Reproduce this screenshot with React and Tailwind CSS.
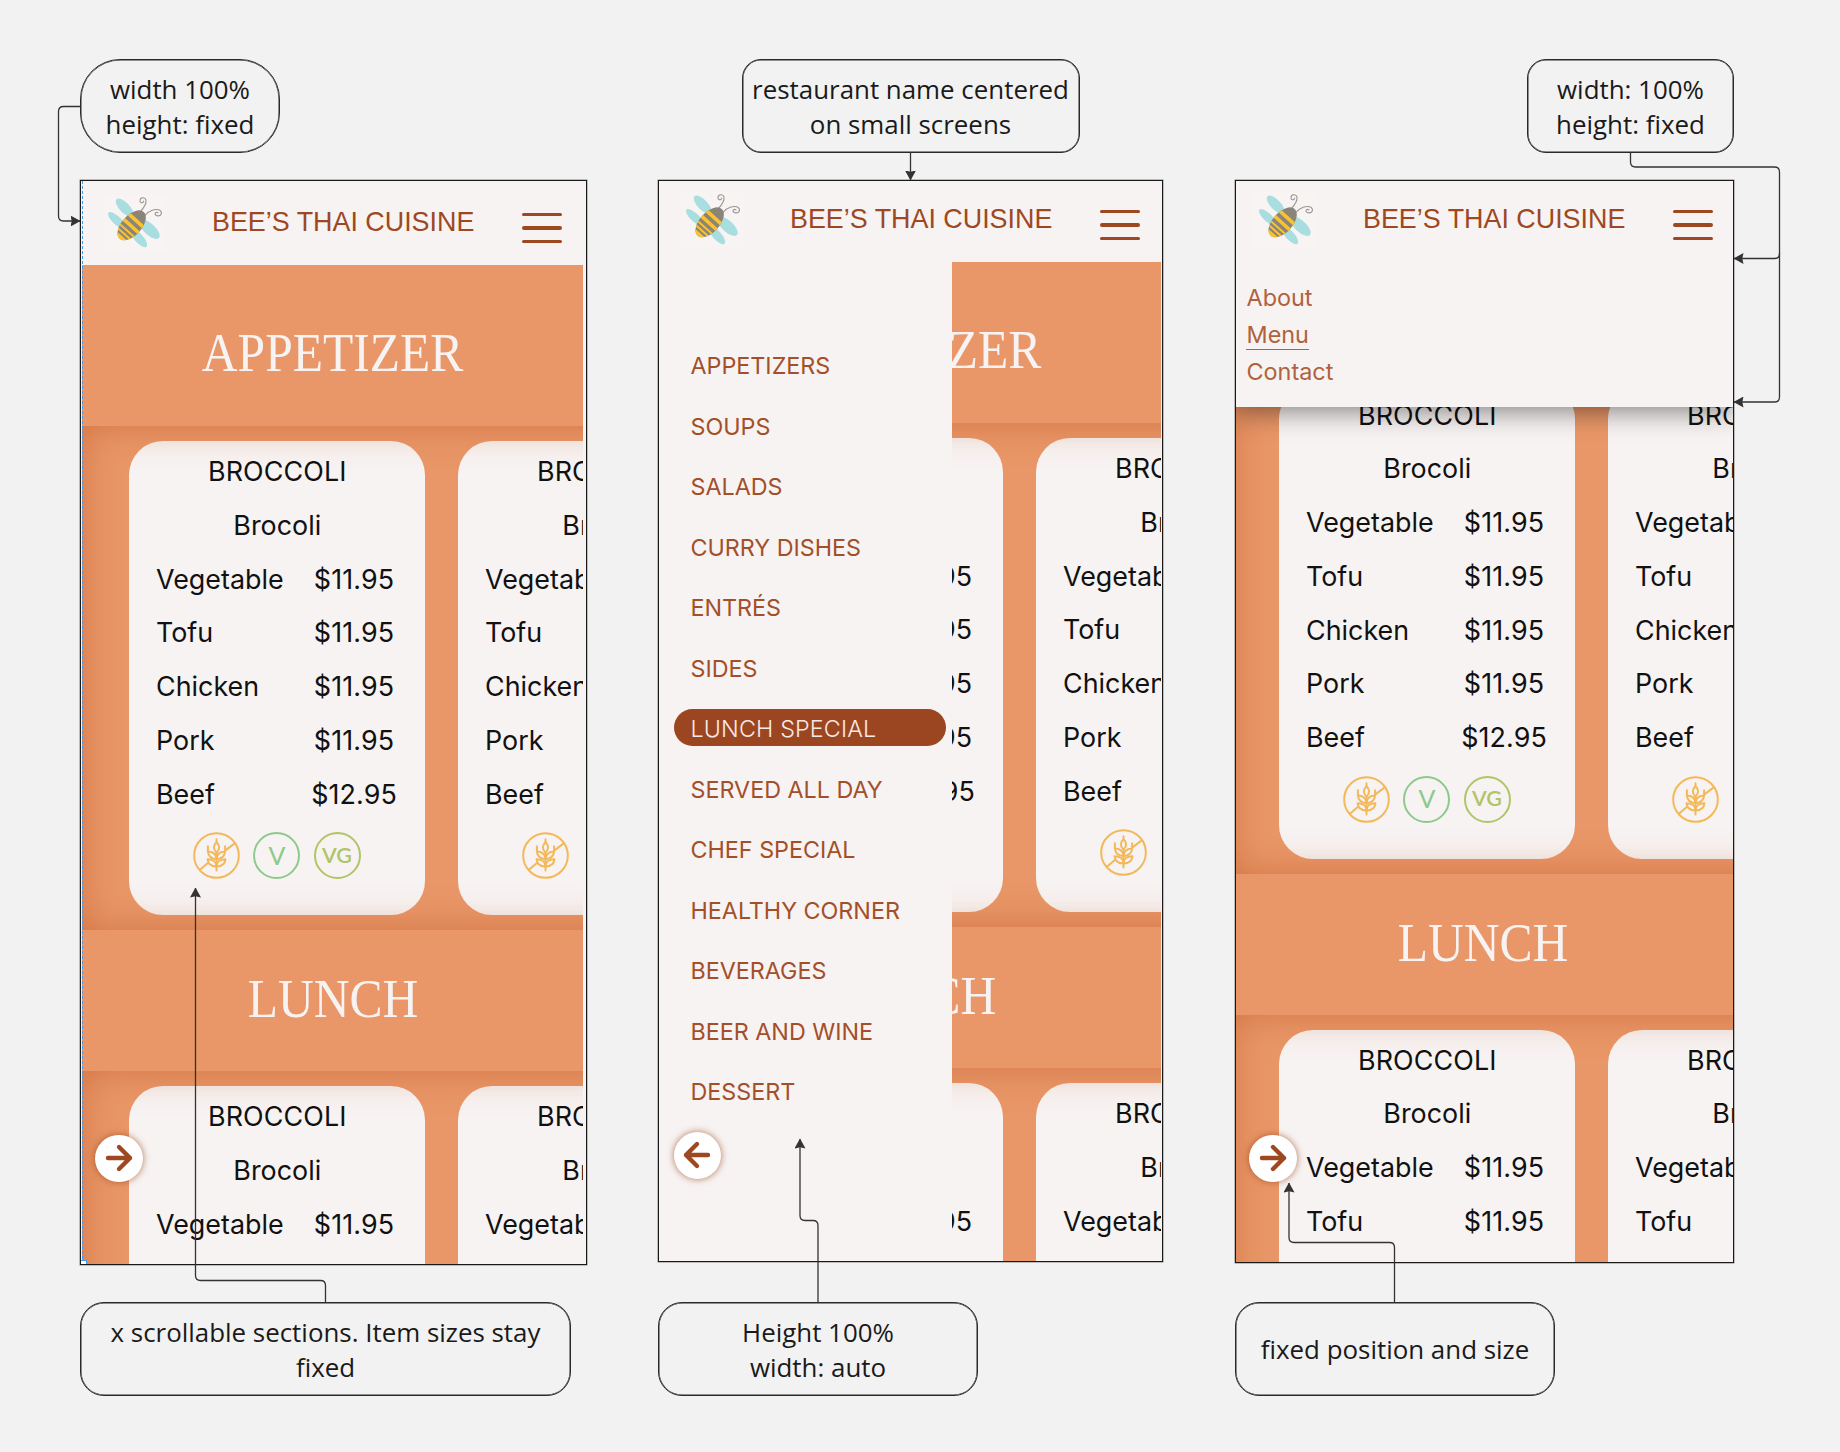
import React from "react";

const PROTEINS = [
  ["Vegetable", "$11.95"],
  ["Tofu", "$11.95"],
  ["Chicken", "$11.95"],
  ["Pork", "$11.95"],
  ["Beef", "$12.95"],
];

const CATEGORIES = [
  "APPETIZERS",
  "SOUPS",
  "SALADS",
  "CURRY DISHES",
  "ENTRÉS",
  "SIDES",
  "LUNCH SPECIAL",
  "SERVED ALL DAY",
  "CHEF SPECIAL",
  "HEALTHY CORNER",
  "BEVERAGES",
  "BEER AND WINE",
  "DESSERT",
];

function Bee() {
  return (
    <svg viewBox="39 45 189 168" className="h-14 w-[63px] shrink-0 bg-[#f8f4f4]">
      <g fill="#a8dee0">
        <ellipse cx="104" cy="83" rx="35" ry="15" transform="rotate(46 104 83)" />
        <ellipse cx="80" cy="121" rx="34" ry="12.5" transform="rotate(44 80 121)" />
        <ellipse cx="179" cy="148" rx="38" ry="17" transform="rotate(43 179 148)" />
        <ellipse cx="146" cy="174" rx="35" ry="13" transform="rotate(48 146 174)" />
      </g>
      <g fill="none" stroke="#9b958e" strokeWidth="3.2" strokeLinecap="round">
        <path d="M151 95C161 84 170 73 168 60C165 50 150 52 150 62C150 70 160 71 161 63" />
        <path d="M165 106C176 93 197 84 210 91C219 98 213 110 201 107C191 104 195 94 204 98" />
      </g>
      <clipPath id="bee-body">
        <ellipse cx="0" cy="0" rx="54" ry="30" />
      </clipPath>
      <g transform="translate(125 136) rotate(-48)">
        <g clipPath="url(#bee-body)">
          <rect x="-60" y="-35" width="120" height="70" fill="#8a8479" />
          <g fill="#f9c22e">
            <rect x="14" y="-35" width="11" height="70" />
            <rect x="-8" y="-35" width="11" height="70" />
            <rect x="-24" y="-35" width="6" height="70" />
            <rect x="-37" y="-35" width="6" height="70" />
            <rect x="-60" y="-35" width="17" height="70" />
          </g>
        </g>
      </g>
    </svg>
  );
}

function Burger() {
  return (
    <div className="flex w-10 flex-col gap-[10px]">
      <span className="h-[3.4px] rounded-full bg-[#9e4822]" />
      <span className="h-[3.4px] rounded-full bg-[#9e4822]" />
      <span className="h-[3.4px] rounded-full bg-[#9e4822]" />
    </div>
  );
}

function Header() {
  return (
    <header className="flex h-[81px] items-start bg-[#f7f3f2]">
      <div className="ml-[21px] mt-[11px]">
        <Bee />
      </div>
      <h1 className="ml-[46px] mt-[18px] whitespace-nowrap font-['Liberation_Sans',sans-serif] text-[26.88px] leading-10 text-[#9e4822]">
        BEE’S THAI CUISINE
      </h1>
      <div className="ml-auto mr-[21px] mt-[29px]">
        <Burger />
      </div>
    </header>
  );
}

function GlutenFree() {
  return (
    <svg
      viewBox="38 38 142 142"
      className="size-[47px]"
      fill="none"
      stroke="#f3b85a"
      strokeWidth="6"
      strokeLinecap="round"
      strokeLinejoin="round"
    >
      <circle cx="109" cy="109" r="67.5" />
      <path d="M109 60V70M109 100V154" />
      <path d="M109 69C99 78 98 90 109 100C120 90 119 78 109 69Z" />
      <path d="M83 81V97C84 110 93 119 109 120C109 106 99 98 83 97" />
      <path d="M135 81V97C134 110 125 119 109 120C109 106 119 98 135 97" />
      <path d="M82 120C83 134 93 142 109 142C109 128 98 120 82 120Z" />
      <path d="M136 120C135 134 125 142 109 142C109 128 120 120 136 120Z" />
      <path d="M60 151L81 133M138 92L162 74" />
    </svg>
  );
}

/*
 * rows:  how many protein rows are inside the visible area
 * peek:  the card is cut off by the screen's right edge, only its left part shows
 * under: the card lies below the open drawer, only its prices show
 */
function Card({ rows, peek, under }) {
  return (
    <article className="h-[474px] w-[295.5px] shrink-0 rounded-[34px] bg-[#f7f3f2] pl-px pt-1 text-[26.88px] leading-[53.75px] text-[#111]">
      <h3 className="h-[53.75px] text-center tracking-[0.12px]">{under ? null : "BROCCOLI"}</h3>
      <p className="h-[53.75px] text-center">{under ? null : "Brocoli"}</p>
      {PROTEINS.slice(0, rows).map(([name, price]) => (
        <div key={name} className="flex justify-between pl-[26px] pr-[27px]">
          <span>{under ? null : name}</span>
          {!peek && <span className="w-[87px] text-center tracking-[0.1px]">{price}</span>}
        </div>
      ))}
      {rows === PROTEINS.length && !under && (
        <div className="ml-[62.5px] mt-[11px] flex gap-[13.5px]">
          <GlutenFree />
          {!peek && (
            <>
              <span className="flex size-[47px] items-center justify-center rounded-full border-2 border-[#8dc98b] pb-px pl-px font-['Lato'] text-[25px] leading-none text-[#8dc98b]">
                V
              </span>
              <span className="flex size-[47px] items-center justify-center rounded-full border-2 border-[#b0c468] pb-px font-['Lato'] text-[21.5px] font-semibold leading-none text-[#b0c468]">
                VG
              </span>
            </>
          )}
        </div>
      )}
    </article>
  );
}

function CardStrip({ rows = 5, under }) {
  return (
    <section className="relative flex h-[504px] w-[760px] gap-[33.5px] bg-[#e99768] py-[15px] pl-[47px]">
      <Card rows={rows} under={under} />
      <Card rows={rows} peek />
      <div className="pointer-events-none absolute inset-0 shadow-[inset_0_0_36px_rgba(190,82,32,0.5)]" />
    </section>
  );
}

function Banner({ children, className }) {
  return (
    <div className={`flex items-center justify-center bg-[#e99768] ${className}`}>
      <h2 className="scale-x-[0.917] font-['Liberation_Serif',serif] text-[54px] leading-none text-[#f7f3f2]">
        {children}
      </h2>
    </div>
  );
}

function Fab({ back, className }) {
  return (
    <div
      className={`absolute z-20 flex size-[47.5px] items-center justify-center rounded-full bg-white shadow-[0_0_7px_rgba(158,72,34,0.75)] ${className}`}
    >
      <svg
        viewBox="0 0 30 30"
        className="size-[30px]"
        fill="none"
        stroke="#9e4822"
        strokeWidth="4.4"
        strokeLinecap="round"
        strokeLinejoin="round"
      >
        {back ? <path d="M26 15H4M15 4L4 15L15 26" /> : <path d="M4 15H26M15 4L26 15L15 26" />}
      </svg>
    </div>
  );
}

function Note({ className, children }) {
  return (
    <div
      className={`flex h-[94px] shrink-0 items-center justify-center border border-[#2a2a2a] pt-px text-center font-['Open_Sans',sans-serif] text-[25.9px] leading-[35px] text-[#1a1a1a] shadow-[inset_0_0_0_0.5px_#2a2a2a] ${className}`}
    >
      <p>{children}</p>
    </div>
  );
}

function Phone({ className, children }) {
  return (
    <div
      className={`relative mt-[27px] shrink-0 overflow-hidden border border-[#1a1a1a] bg-[#f7f3f2] shadow-[0_0_0_0.5px_rgba(26,26,26,0.5)] ${className}`}
    >
      {children}
    </div>
  );
}

function Drawer() {
  return (
    <nav className="absolute bottom-0 left-0 top-[81px] z-10 flex w-[293px] flex-col gap-[23.5px] bg-[#f7f3f2] pl-[14.5px] pt-[84px] text-[23.3px] text-[#a34f29]">
      {CATEGORIES.map((name) => (
        <a
          key={name}
          className={
            name === "LUNCH SPECIAL"
              ? "h-[37px] w-[272.5px] rounded-full bg-[#9c4521] pl-[17px] pt-px font-light leading-[38px] tracking-[0.15px] text-[#f7e9e3]"
              : "h-[37px] w-[272.5px] pl-[17px] pt-px leading-[38px]"
          }
        >
          {name}
        </a>
      ))}
    </nav>
  );
}

function Connectors() {
  return (
    <svg
      className="pointer-events-none absolute inset-0 z-30"
      width="1840"
      height="1452"
      fill="none"
      stroke="#333"
      strokeWidth="1.3"
    >
      <defs>
        <marker id="tip" viewBox="0 0 10 11" refX="9.5" refY="5.5" markerWidth="10" markerHeight="11" markerUnits="userSpaceOnUse" orient="auto">
          <path d="M0 0L10 5.5L0 11L1.2 5.5Z" fill="#333" stroke="none" />
        </marker>
      </defs>
      <path markerEnd="url(#tip)" d="M81 106.5H63.5Q58.5 106.5 58.5 111.5V216Q58.5 221 63.5 221H80" />
      <path markerEnd="url(#tip)" d="M910.5 153V180" />
      <path markerEnd="url(#tip)" d="M1630.5 153V162Q1630.5 167 1635.5 167H1774.5Q1779.5 167 1779.5 172V253.5Q1779.5 258.5 1774.5 258.5H1734" />
      <path markerEnd="url(#tip)" d="M1779.5 253V397Q1779.5 402 1774.5 402H1734" />
      <path markerEnd="url(#tip)" d="M325.5 1303V1285.5Q325.5 1280.5 320.5 1280.5H200.5Q195.5 1280.5 195.5 1275.5V888" />
      <path markerEnd="url(#tip)" d="M818 1303V1225.5Q818 1220.5 813 1220.5H805Q800 1220.5 800 1215.5V1139" />
      <path markerEnd="url(#tip)" d="M1394.5 1303V1247.5Q1394.5 1242.5 1389.5 1242.5H1294Q1289 1242.5 1289 1237.5V1183" />
    </svg>
  );
}

export default function App() {
  return (
    <main className="relative flex h-[1452px] w-[1840px] gap-[71px] overflow-hidden bg-[#f2f2f2] pb-[56px] pl-20 pt-[59px] font-['Inter',sans-serif]">
      <div className="flex w-[507px] flex-col">
        <Note className="w-[200px] rounded-[40px]">
          width 100%
          <br />
          height: fixed
        </Note>
        <Phone className="h-[1084.5px] w-[507px]">
          <div className="ml-px w-[501px] overflow-hidden pt-[3px]">
            <Header />
            <Banner className="h-[161px] pt-[15px]">APPETIZER</Banner>
            <CardStrip />
            <Banner className="h-[141px] pb-[3px]">LUNCH</Banner>
            <CardStrip rows={1} />
          </div>
          <Fab className="left-[14px] top-[953.5px]" />
          <div className="absolute inset-y-0 left-px border-l border-dashed border-[#4a98e8]" />
          <div className="absolute bottom-0 left-0 h-1 w-1.5 border-r border-t border-[#4a98e8] bg-white" />
        </Phone>
        <Note className="mt-auto w-[491px] rounded-[24px]">
          x scrollable sections. Item sizes stay
          <br />
          fixed
        </Note>
      </div>

      <div className="flex w-[505px] flex-col">
        <Note className="mx-auto w-[338px] rounded-[19px]">
          restaurant name centered
          <br />
          on small screens
        </Note>
        <Phone className="h-[1081.5px] w-[505px]">
          <div className="ml-px w-[501px] overflow-hidden">
            <Header />
            <Banner className="h-[161px] pt-[15px]">APPETIZER</Banner>
            <CardStrip under />
            <Banner className="h-[141px] pb-[3px]">LUNCH</Banner>
            <CardStrip rows={1} under />
          </div>
          <Drawer />
          <Fab back className="left-[14.7px] top-[950.5px]" />
        </Phone>
        <Note className="mt-auto w-[320px] rounded-[24px]">
          Height 100%
          <br />
          width: auto
        </Note>
      </div>

      <div className="ml-px flex w-[499px] flex-col">
        <Note className="ml-auto w-[207px] rounded-[19px]">
          width: 100%
          <br />
          height: fixed
        </Note>
        <Phone className="h-[1083px] w-[499px]">
          <div className="-ml-[3px] w-[501px]">
            <div className="relative z-10 h-[226px] bg-[#f7f3f2] shadow-[0_4px_26px_rgba(0,0,0,0.48)]">
              <Header />
              <nav className="flex flex-col items-start pl-[13.5px] pt-[17px] text-[23.4px] leading-[37px] text-[#b0623e]">
                <a>About</a>
                <a className="relative">
                  Menu
                  <span className="absolute -left-px bottom-[3px] right-0 h-[1.5px] bg-[#b0623e]" />
                </a>
                <a>Contact</a>
              </nav>
            </div>
            <div className="overflow-hidden">
              <div className="-ml-px -mt-[37.5px]">
                <CardStrip />
                <Banner className="h-[141px] pb-[3px]">LUNCH</Banner>
                <CardStrip rows={2} />
              </div>
            </div>
          </div>
          <Fab className="left-[13px] top-[953.5px]" />
        </Phone>
        <Note className="mt-auto w-[320px] rounded-[24px]">fixed position and size</Note>
      </div>
      <Connectors />
    </main>
  );
}
